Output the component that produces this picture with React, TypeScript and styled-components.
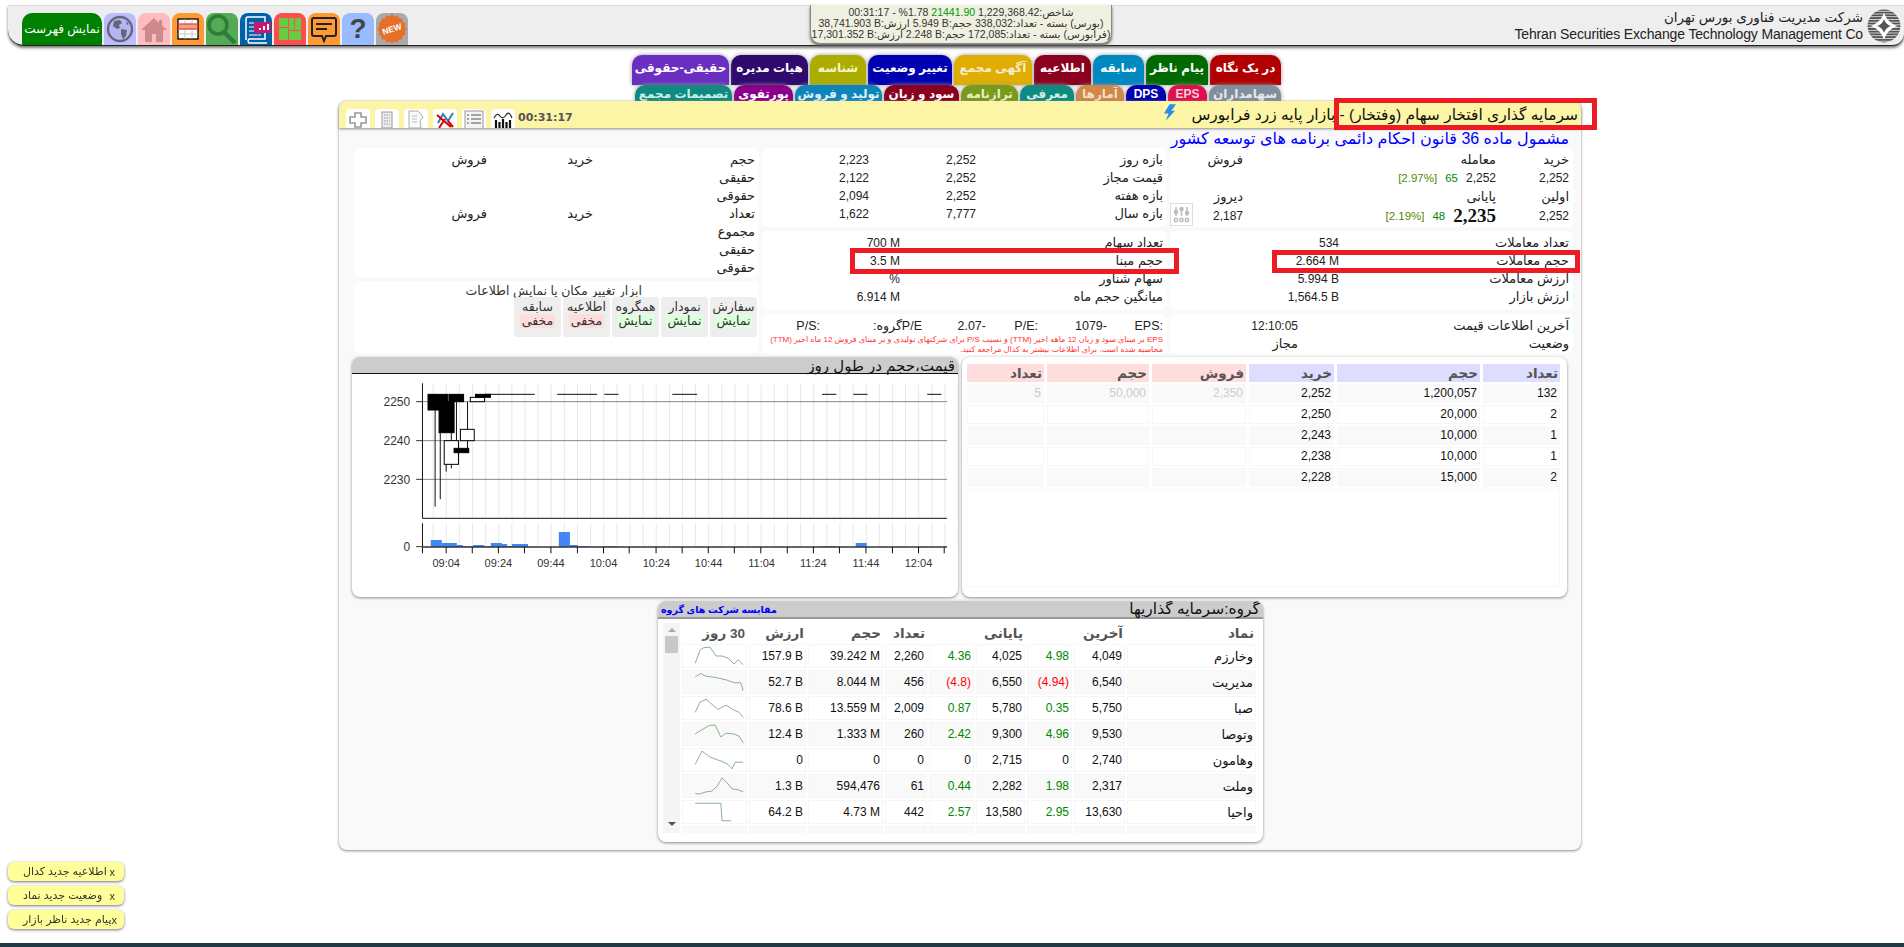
import React from "react";
import styled, { createGlobalStyle } from "styled-components";

const Global = createGlobalStyle`
  html, body { margin: 0; padding: 0; background: #fff; overflow: hidden; height: 100%; }
  body { font-family: "Liberation Sans", "DejaVu Sans", sans-serif; font-size: 12px; color: #222; }
`;
const Page = styled.div`width: 1904px; height: 947px; padding: 5px 0 0 8px; box-sizing: border-box;`;

/* ---------- top bar ---------- */
const TopBar = styled.header`
  display: grid; grid-template-columns: 802px 302px 1fr;
  height: 41px; box-sizing: border-box; background: #eee;
  border-top: 1px solid #ddd; border-bottom: 1px solid #222;
  border-radius: 0 0 12px 16px; box-shadow: 0 2px 3px #777;
`;
const Launch = styled.div`display: flex; gap: 2px; align-items: flex-end; padding-left: 14px;`;
const MenuButton = styled.div`
  width: 80px; height: 32px; background: #008000; color: #fff; border-radius: 10px 10px 0 0;
  display: flex; align-items: center; justify-content: center; font-size: 12px; direction: rtl; white-space: nowrap;
`;
const AppTile = styled.div<{ $bg: string }>`
  width: 32px; height: 32px; background: ${p => p.$bg}; border-radius: 8px 8px 0 0;
  display: flex; align-items: center; justify-content: center; overflow: hidden;
`;
const HelpGlyph = styled.span`font: bold 28px "Liberation Sans", sans-serif; color: #444;`;
const StatusBox = styled.div`
  height: 39px; margin-top: -1px; box-sizing: border-box; background: #f0f0e0; border-radius: 0 0 10px 10px;
  border: 1px solid #888; border-top: 0; box-shadow: 0 2px 3px #666; font-size: 10.5px; line-height: 11px;
  text-align: center; padding-top: 2px; direction: rtl; color: #333; white-space: nowrap; overflow: hidden;
`;
const Up = styled.span`color: #090;`;
const Brand = styled.div`display: flex; justify-content: flex-end; align-items: center; gap: 4px; padding-right: 3px;`;
const BrandText = styled.div`text-align: right; color: #222; white-space: nowrap;`;
const BrandFa = styled.div`font-size: 13.5px; line-height: 17px; direction: rtl; text-align: right;`;
const BrandEn = styled.div`font-size: 14px; line-height: 17px; letter-spacing: -0.15px;`;

/* ---------- tabs ---------- */
const TabsBlock = styled.nav`width: 652px; margin: 9px 0 0 621px; height: 46px;`;
const TabRow = styled.div<{ $h: number; $z: number; $pad: string }>`
  display: flex; direction: rtl; gap: 2px; height: ${p => p.$h}px; position: relative; z-index: ${p => p.$z};
  & > * { padding: ${p => p.$pad}; }
`;
const Tab = styled.div<{ $w: number; $bg: string; $fg?: string }>`
  width: ${p => p.$w}px; flex: none; background: ${p => p.$bg}; color: ${p => p.$fg || "#fff"};
  border-radius: 10px 10px 0 0; box-shadow: 0 0 4px #999; display: flex; justify-content: center; align-items: center;
  font-size: 12px; font-weight: bold; white-space: nowrap; box-sizing: border-box; overflow: hidden;
`;

/* ---------- panel ---------- */
const Panel = styled.main`
  position: relative; z-index: 3; width: 1242px; height: 749px; margin-left: 331px; box-sizing: border-box; background: #f9f9f9;
  border-radius: 8px; box-shadow: 0 1px 3px #888;
`;
const PanelHead = styled.div`
  height: 27px; background: #fbf5a5; border-radius: 8px 8px 0 0; box-shadow: 0 1px 3px #888;
  display: flex; justify-content: space-between; align-items: flex-end; padding: 0 3px 0 7px; overflow: hidden;
`;
const Tools = styled.div`display: flex; gap: 5px; align-items: flex-end;`;
const ToolTile = styled.div`
  width: 24px; height: 19px; background: #fff; border-radius: 4px 4px 0 0; overflow: hidden; display: flex; justify-content: center;
`;
const Clock = styled.div`font: bold 11px "DejaVu Sans", sans-serif; color: #555; align-self: center; margin-left: -2px; margin-top: -2px;`;
const Title = styled.div`direction: rtl; align-self: center; font-size: 15.5px; color: #111; white-space: nowrap;`;
const Bolt = styled.svg`width: 13px; height: 17px; position: absolute; left: 824px; top: 3px;`;
const PanelBody = styled.div`padding: 0 8px 0 15px;`;
const Subtitle = styled.div`height: 20px; line-height: 22px; direction: rtl; color: #00f; font-size: 16px; padding-right: 4px; white-space: nowrap;`;
const InfoGrid = styled.section`display: grid; grid-template-columns: 405px 405px 403px; gap: 3px; position: relative;`;
const Column = styled.div<{ $gap: number }>`display: flex; flex-direction: column; gap: ${p => p.$gap}px;`;
const Card = styled.div<{ $h: number; $pr?: number }>`
  height: ${p => p.$h}px; background: #fff; border-radius: 6px; box-sizing: border-box; padding: 3px ${p => p.$pr ?? 4}px 0 0; overflow: hidden;
`;
const Rows = styled.div<{ $cols: string; $rows?: string }>`
  display: grid; direction: rtl; grid-template-columns: ${p => p.$cols}; ${p => p.$rows ? `grid-template-rows:${p.$rows};` : "grid-auto-rows: 18px;"}
  align-items: center; white-space: nowrap; line-height: 18px; font-size: 13px; color: #222;
`;
const Val = styled.span`direction: ltr; unicode-bidi: isolate; text-align: right; font-size: 12px;`;
const Pair = styled.span`display: inline-flex; gap: 8px; align-items: center; font-size: 12px;`;
const Big = styled.b`font: bold 19px "Liberation Serif", serif; color: #111;`;
const Plus = styled.span`color: #080; font-size: 11.5px;`;
const Bracket = styled.span`color: #580; font-size: 11.5px; direction: ltr; unicode-bidi: isolate;`;
const FilterButton = styled.div`
  position: absolute; left: 816px; top: 55px; width: 23px; height: 23px; box-sizing: border-box; border: 1px solid #ddd; background: #fff;
  display: flex; align-items: center; justify-content: center;
`;
const Note = styled.div`direction: rtl; color: #f33; font-size: 8px; line-height: 9.5px; white-space: nowrap;`;
const RatioRow = styled.div`display: grid; direction: rtl; grid-template-columns: 56px 69px 52px 64px 102px 1fr; line-height: 18px; height: 18px; color: #222; font-size: 12.5px;`;
const Centered = styled.div`text-align: center; direction: rtl; line-height: 12px; height: 12px; margin: 1px 0 0 118px; width: 170px; white-space: nowrap; color: #333; font-size: 12.5px;`;
const ToggleRow = styled.div`display: flex; direction: rtl; gap: 2px;`;
const Toggle = styled.div`
  width: 47px; height: 40px; background: #eee; border-radius: 3px; display: flex; flex-direction: column; align-items: center; padding-top: 3px; box-sizing: border-box;
  line-height: 14px; color: #333; font-size: 12.5px;
`;
const Chip = styled.span<{ $on: boolean }>`background: ${p => p.$on ? "#dfd" : "#fdd"}; padding: 0 2px; white-space: nowrap;`;

/* ---------- chart and book ---------- */
const Split = styled.section`display: grid; grid-template-columns: 606px 605px; gap: 4px; margin: 3px 0 0 -2px; height: 240px;`;
const Box = styled.div`background: #fff; border-radius: 8px; box-shadow: 0 1px 3px #888; overflow: hidden;`;
const BoxHead = styled.div`
  height: 16px; background: #ccc; border-bottom: 1px solid #111; direction: rtl; padding-right: 3px; font-size: 15px; line-height: 17px; color: #111;
`;
const ChartSvg = styled.svg`display: block; width: 606px; height: 222px;`;
const Book = styled.table`
  border-collapse: separate; border-spacing: 3px 2px; direction: rtl; margin: 5px 4px 0 auto; width: 597px; table-layout: fixed;
`;
const BookHead = styled.th<{ $bg: string; $w: number }>`
  width: ${p => p.$w}px; height: 18px; padding: 0 2px; background: ${p => p.$bg}; color: #555; font-size: 13.5px; font-weight: bold; text-align: right;
`;
const BookCell = styled.td<{ $odd: boolean; $dim?: boolean }>`
  height: 17px; padding: 0 2px; direction: ltr; text-align: right; background: ${p => p.$odd ? "#f9f9f9" : "#fff"}; border: 1px solid ${p => p.$odd ? "#f9f9f9" : "#f6f6f6"};
  color: ${p => p.$dim ? "#ccc" : "#111"}; font-size: 12px; line-height: 17px;
`;
const BookEmpty = styled.td`height: 94px; border: 1px solid #f8f8f8;`;

/* ---------- group ---------- */
const GroupBox = styled(Box)`width: 605px; height: 241px; margin: 4px 0 0 304px;`;
const GroupHead = styled.div`
  height: 16px; background: #ccc; border-bottom: 2px solid #999; display: flex; justify-content: space-between; align-items: center; padding: 0 3px;
`;
const GroupLink = styled.span`color: #00f; font-size: 9.5px; font-weight: bold; direction: rtl;`;
const GroupTitle = styled.span`direction: rtl; font-size: 15.5px; color: #111;`;
const GroupInner = styled.div`display: flex; align-items: flex-start; height: 210px; margin: 4px 5px 0 5px; overflow: hidden;`;
const FakeBar = styled.div`
  width: 17px; flex: none; background: #f5f5f5; display: flex; flex-direction: column; align-items: center; padding-top: 5px; box-sizing: border-box; position: relative; height: 210px;
`;
const Thumb = styled.div`width: 13px; height: 17px; background: #c8c8c8; margin-top: 4px;`;
const ArrowUp = styled.div`width: 0; height: 0; border: 4px solid transparent; border-top: 0; border-bottom: 4px solid #aaa;`;
const ArrowDown = styled.div`position: absolute; bottom: 7px; width: 0; height: 0; border: 4px solid transparent; border-bottom: 0; border-top: 4px solid #555;`;
const GroupTable = styled.table`
  border-collapse: separate; border-spacing: 2px; direction: rtl; table-layout: fixed; width: 578px; margin-top: -1px; flex: none;
`;
const GroupTh = styled.th<{ $w?: number }>`
  ${p => p.$w ? `width:${p.$w}px;` : ""} height: 18px; padding: 0 2px; text-align: right; color: #555; font-size: 13.5px; font-weight: bold; white-space: nowrap;
`;
const GroupTd = styled.td<{ $odd: boolean; $c?: string }>`
  height: 22px; padding: 0 2px; box-sizing: content-box; background: ${p => p.$odd ? "#fff" : "#f9f9f9"}; border: 1px solid #f6f6f6;
  direction: ltr; text-align: right; color: ${p => p.$c || "#111"}; font-size: 12px; white-space: nowrap;
`;
const GroupName = styled(GroupTd)`font-size: 13px;`;
const SparkCell = styled.td<{ $odd: boolean }>`height: 22px; padding: 0; background: ${p => p.$odd ? "#fff" : "#f9f9f9"}; border: 1px solid #f6f6f6;`;
const Spark = styled.svg`display: block; width: 62px; height: 22px;`;

/* ---------- overlays ---------- */
const Toasts = styled.aside`position: fixed; left: 8px; top: 862px; display: flex; flex-direction: column; gap: 5px;`;
const Toast = styled.div`
  width: 116px; height: 19px; background: #ffff99; border-radius: 6px; box-shadow: 0 1px 3px #777; display: flex; justify-content: space-between; align-items: center;
  padding: 0 9px 0 15px; box-sizing: border-box; font-size: 11px; color: #333; white-space: nowrap;
`;
const Footer = styled.div`position: fixed; left: 0; right: 0; bottom: 0; height: 4px; background: #1f3a44;`;
const Mark = styled.div<{ $x: number; $y: number; $w: number; $h: number }>`
  position: fixed; left: ${p => p.$x}px; top: ${p => p.$y}px; width: ${p => p.$w}px; height: ${p => p.$h}px; border: 5px solid #ed1c24; box-sizing: border-box; z-index: 10; pointer-events: none;
`;

/* ---------- drawings ---------- */
const Globe = () => (
  <svg width="28" height="28" viewBox="0 0 28 28"><circle cx="14" cy="14" r="12" fill="#b5b5f5" stroke="#667" strokeWidth="2.4" />
    <path d="M8 6l6-1 2 3-3 2 1 3-3 1-4-3zM15 14l6 1-1 6-3 3-2-5z M20 6l3 3-2 1z" fill="#667" /></svg>
);
const Home = () => (
  <svg width="30" height="28" viewBox="0 0 30 28"><path d="M15 3L2 15h4v12h7v-8h4v8h7V15h4l-5-4.600V5h-3v3z" fill="#cc8a8d" /></svg>
);
const TableIcon = () => (
  <svg width="22" height="22" viewBox="0 0 22 22"><rect x="1" y="1" width="20" height="20" fill="#fff" stroke="#111" strokeWidth="1.400" />
    <path d="M1 6h20M1 11h20M1 16h20M8 1v20M15 1v20" stroke="#bbb" strokeWidth=".8" /><rect x="1.500" y="6" width="19" height="5" fill="#f5a080" stroke="#d33" /></svg>
);
const SearchIcon = () => (
  <svg width="32" height="30" viewBox="0 0 32 30"><circle cx="12" cy="11" r="9" fill="none" stroke="#2e7d3a" strokeWidth="3.600" /><path d="M18 18l11 11" stroke="#2e7d3a" strokeWidth="4.500" /></svg>
);
const BookIcon = () => (
  <svg width="30" height="30" viewBox="0 0 30 30"><path d="M5 26V5a2 2 0 012-2h17v22H8a3 3 0 000 4h18" fill="none" stroke="#fff" strokeWidth="1.500" />
    <path d="M8 9h7M8 13h12M8 17h12M8 21h12" stroke="#fff" strokeWidth="1" /><path d="M13 8h17v11h-12l-2 3v-3h-3z" fill="#c8186e" /><path d="M18 16v-2h2v2zM22 16v-4h2v4zM26 16v-6h2v6z" fill="#fff" /></svg>
);
const GridIcon = () => (
  <svg width="24" height="24" viewBox="0 0 24 24" fill="#6c4"><rect x="1" y="1" width="9" height="9" /><rect x="1" y="11" width="9" height="12" /><rect x="11" y="1" width="5" height="12" /><rect x="17" y="1" width="6" height="12" /><rect x="11" y="14" width="12" height="9" /></svg>
);
const ChatIcon = () => (
  <svg width="28" height="28" viewBox="0 0 28 28"><path d="M4 3h20a2 2 0 012 2v14a2 2 0 01-2 2h-8l-2 5-2-5H4a2 2 0 01-2-2V5a2 2 0 012-2z" fill="none" stroke="#222" strokeWidth="2" /><path d="M6 9h16M6 14h11" stroke="#222" strokeWidth="2" /></svg>
);
const NewBadge = () => {
  const pts = Array.from({ length: 32 }, (_, i) => {
    const r = i % 2 ? 13 : 14.500, a = (i * Math.PI) / 16;
    return `${15 + r * Math.cos(a)},${15 + r * Math.sin(a)}`;
  }).join(" ");
  return (
    <svg width="30" height="30" viewBox="0 0 30 30"><polygon points={pts} fill="#e4702a" /><text x="15" y="18" fontSize="8.500" fontWeight="bold" fill="#fff" textAnchor="middle" transform="rotate(-18 15 15)" fontFamily="Liberation Sans">NEW</text></svg>
  );
};
const Logo = () => (
  <svg width="34" height="34" viewBox="0 0 30 30">
    <defs><pattern id="st" width="4" height="2.400" patternUnits="userSpaceOnUse"><rect width="4" height="1.700" fill="#555" /></pattern></defs>
    <circle cx="15" cy="15" r="14.500" fill="url(#st)" />
    <path d="M15 3c2 6 6 10 12 12-6 2-10 6-12 12-2-6-6-10-12-12 6-2 10-6 12-12z" fill="#fff" />
    <path d="M15 9c1 3 3 5 6 6-3 1-5 3-6 6-1-3-3-5-6-6 3-1 5-3 6-6z" fill="#555" />
  </svg>
);
const ToolPlus = () => <svg width="18" height="19" viewBox="0 0 18 19"><path d="M6 4h6v4h5v6h-5v4H6v-4H1V8h5z" fill="none" stroke="#999" strokeWidth="1.600" /></svg>;
const ToolCalc = () => <svg width="14" height="19" viewBox="0 0 14 19"><rect x="2" y="3" width="10" height="16" fill="#eee" stroke="#999" /><path d="M4 6h6M4 9h6M4 12h6M4 15h6" stroke="#999" strokeDasharray="1.500 1" /></svg>;
const ToolDoc = () => <svg width="18" height="19" viewBox="0 0 18 19"><path d="M2 2h9l5 6-3 4 1 7H2z" fill="#fafafa" stroke="#aaa" /><path d="M5 7h5M5 10h5M5 13h5" stroke="#bbb" /></svg>;
const ToolNet = () => <svg width="20" height="19" viewBox="0 0 20 19"><path d="M3 14l5-9 5 7 5-8" fill="none" stroke="#2a7fc0" strokeWidth="2" /><path d="M2 6l14 12M4 19l6-9" stroke="#d00" strokeWidth="2" /><path d="M13 12l5 6" stroke="#d00" strokeWidth="2" /></svg>;
const ToolList = () => <svg width="20" height="19" viewBox="0 0 20 19"><rect x="1" y="2" width="18" height="18" fill="#f4f4f4" stroke="#999" /><path d="M3 6h2M3 10h2M3 14h2M7 6h10M7 10h10M7 14h10" stroke="#888" strokeWidth="1.400" /></svg>;
const ToolBars = () => <svg width="20" height="19" viewBox="0 0 20 19"><path d="M1 9q3-6 6-2t6-1 6 3" fill="none" stroke="#222" strokeWidth="1.200" /><path d="M3 19v-8M6.500 19v-6M10 19v-9M13.500 19v-6M17 19v-8" stroke="#111" strokeWidth="2.200" /></svg>;
const FilterIcon = () => <svg width="19" height="19" viewBox="0 0 19 19" fill="none" stroke="#bbb" strokeWidth="1.500"><path d="M4 2v9M9.500 2v9M15 2v9" /><circle cx="4" cy="7" r="1.500" fill="#bbb" /><circle cx="9.500" cy="4" r="1.500" fill="#bbb" /><circle cx="15" cy="8" r="1.500" fill="#bbb" /><circle cx="4" cy="15" r="1.700" /><circle cx="9.500" cy="15" r="1.700" /><circle cx="15" cy="15" r="1.700" /></svg>;

/* ---------- chart ---------- */
const X = (z: number) => z / 2.53 - 7;
const Y = (z: number) => z / 3 - 19;
const tickZ = [256, 322, 388, 454, 521, 588, 654, 719, 787, 853, 919, 985, 1052, 1119, 1185, 1251, 1318, 1385, 1451, 1516];
const timeLabels: [number, string][] = [[256, "09:04"], [388, "09:24"], [521, "09:44"], [654, "10:04"], [788, "10:24"], [920, "10:44"], [1054, "11:04"], [1185, "11:24"], [1318, "11:44"], [1451, "12:04"]];
const wicks: number[][] = [[228, 118, 455], [241, 233, 433], [256, 328, 350], [269, 233, 340], [282, 140, 280], [310, 140, 280]];
const candles: [number, number, number, number, boolean][] = [
  [210, 260, 118, 165, true], [238, 276, 140, 233, true], [263, 300, 118, 140, true], [251, 287, 257, 328, false],
  [276, 313, 280, 293, true], [292, 327, 223, 257, false], [317, 353, 127, 140, false], [330, 368, 118, 127, true],
];
const dashes = [[353, 480], [537, 638], [656, 692], [828, 891], [1207, 1243], [1286, 1322], [1473, 1509]];
const vols = [[217, 245, 555], [245, 283, 564], [283, 298, 570], [298, 324, 574], [324, 352, 570], [352, 369, 574], [369, 397, 564], [397, 410, 567], [410, 422, 573], [422, 463, 567], [541, 569, 531], [569, 589, 570], [589, 620, 574], [654, 690, 574], [1207, 1245, 574], [1292, 1320, 564]];

const Chart = () => {
  const grid = Array.from({ length: 41 }, (_, i) => 223 + i * 33.2);
  return (
    <ChartSvg viewBox="0 0 606 222">
      {grid.map(z => <line key={z} x1={X(z)} x2={X(z)} y1={Y(88)} y2={Y(490)} stroke="#e8e8e8" />)}
      {grid.map(z => <line key={"v" + z} x1={X(z)} x2={X(z)} y1={Y(505)} y2={Y(576)} stroke="#e8e8e8" />)}
      {[140, 257, 373].map(z => <line key={z} x1={X(196)} x2={X(1523)} y1={Y(z)} y2={Y(z)} stroke="#888" strokeWidth="1" />)}
      <path d={`M${X(196)} ${Y(85)}V${Y(490)}H${X(1523)}M${X(196)} ${Y(505)}V${Y(595)}`} fill="none" stroke="#111" />
      {[[2250, 140], [2240, 257], [2230, 373]].map(([t, z]) => <text key={t} x={X(165)} y={Y(z) + 4.5} fontSize="12" fill="#333" textAnchor="end" fontFamily="Liberation Sans">{t}</text>)}
      {wicks.map(([x, a, b]) => <line key={x} x1={X(x)} x2={X(x)} y1={Y(a)} y2={Y(b)} stroke="#111" />)}
      {dashes.map(([a, b]) => <line key={a} x1={X(a)} x2={X(b)} y1={Y(118)} y2={Y(118)} stroke="#111" />)}
      {candles.map(([a, b, t, u, black]) => <rect key={a + "" + t} x={X(a)} y={Y(t)} width={X(b) - X(a)} height={Y(u) - Y(t)} fill={black ? "#000" : "#fff"} stroke="#000" strokeWidth="1" />)}
      {vols.map(([a, b, t]) => <rect key={a} x={X(a)} y={Y(t)} width={X(b) - X(a)} height={Y(576) - Y(t)} fill="#4285f4" />)}
      <line x1={X(196)} x2={X(1523)} y1={Y(576)} y2={Y(576)} stroke="#333" strokeWidth="1.500" />
      <text x={X(165)} y={Y(575) + 4.5} fontSize="12" fill="#333" textAnchor="end" fontFamily="Liberation Sans">0</text>
      <line x1={X(180)} x2={X(196)} y1={Y(575)} y2={Y(575)} stroke="#333" />
      {[140, 257, 373].map(z => <line key={"t" + z} x1={X(180)} x2={X(196)} y1={Y(z)} y2={Y(z)} stroke="#333" />)}
      {tickZ.map(z => <line key={"k" + z} x1={X(z)} x2={X(z)} y1={Y(576)} y2={Y(595)} stroke="#111" />)}
      {timeLabels.map(([z, t]) => <text key={t} x={X(z)} y={Y(625) + 4} fontSize="11" fill="#333" textAnchor="middle" fontFamily="Liberation Sans">{t}</text>)}
    </ChartSvg>
  );
};

/* ---------- data ---------- */
const tabs1: [string, number, string, string?][] = [
  ["در یک نگاه", 71, "#b00000"], ["پیام ناظر", 62, "#006a00"], ["سابقه", 51, "#0088c0"], ["اطلاعیه", 57, "#8b001f"],
  ["آگهی مجمع", 78, "#e0ae00", "#f4ead0"], ["تغییر وضعیت", 84, "#0000b0"], ["شناسه", 56, "#adad00", "#f5f5c8"], ["هیات مدیره", 77, "#2e0a6e"], ["حقیقی-حقوقی", 97, "#6a2fc0"],
];
const tabs2: [string, number, string, string?][] = [
  ["سهامداران", 72, "#7f8fa0", "#e8e8e8"], ["EPS", 39, "#e01050", "#f5d0d8"], ["DPS", 40, "#0000b0"], ["آمارها", 48, "#d0874a", "#f5dfc8"], ["معرفی", 54, "#0e8a80", "#d0eee8"],
  ["ترازنامه", 57, "#7a9a1a", "#e8eec8"], ["سود و زیان", 75, "#8b001f"], ["تولید و فروش", 87, "#0d85bb", "#e0f0f8"], ["پورتفوی", 59, "#8a008a"], ["تصمیمات مجمع", 97, "#108a80", "#c8eee8"],
];
const toggles: [string, string, boolean][] = [["سفارش", "نمایش", true], ["نمودار", "نمایش", true], ["همگروه", "نمایش", true], ["اطلاعیه", "مخفی", false], ["سابقه", "مخفی", false]];
const bookRows = [["132", "1,200,057", "2,252", "2,350", "50,000", "5"], ["2", "20,000", "2,250", "", "", ""], ["1", "10,000", "2,243", "", "", ""], ["1", "10,000", "2,238", "", "", ""], ["2", "15,000", "2,228", "", "", ""]];
const groupRows: { n: string; v: string[]; s: string }[] = [
  { n: "وخارزم", v: ["4,049", "4.98", "4,025", "4.36", "2,260", "39.242 M", "157.9 B"], s: "108,50 120,14 130,7 145,6 160,30 175,30 190,36 205,52 215,40 228,54" },
  { n: "مدیریت", v: ["6,540", "(4.94)", "6,550", "(4.8)", "456", "8.044 M", "52.7 B"], s: "108,16 122,7 135,14 160,18 185,24 205,32 222,32 228,54" },
  { n: "صبا", v: ["5,750", "0.35", "5,780", "0.87", "2,009", "13.559 M", "78.6 B"], s: "108,42 120,14 135,6 150,20 165,34 185,22 205,36 218,42 228,56" },
  { n: "وتوصا", v: ["9,530", "4.96", "9,300", "2.42", "260", "1.333 M", "12.4 B"], s: "108,30 122,20 145,6 158,6 172,38 185,28 205,30 218,36 228,54" },
  { n: "وهامون", v: ["2,740", "0", "2,715", "0", "0", "0", "0"], s: "108,42 125,6 145,22 160,28 175,34 190,42 200,54 208,36 228,36" },
  { n: "وملت", v: ["2,317", "1.98", "2,282", "0.44", "61", "594,476", "1.3 B"], s: "108,50 118,52 135,46 150,44 163,30 175,8 190,24 200,38 215,40 228,46" },
  { n: "واحیا", v: ["13,630", "2.95", "13,580", "2.57", "442", "4.73 M", "64.2 B"], s: "108,6 172,6 175,54 198,54" },
];
const pctColor = (s: string) => (s === "0" ? "#111" : s.startsWith("(") ? "#f00" : "#080");

export default function App() {
  return (
    <Page>
      <Global />
      <TopBar>
        <Launch>
          <MenuButton>نمایش فهرست</MenuButton>
          <AppTile $bg="#bcbcff"><Globe /></AppTile>
          <AppTile $bg="#ffbcc0"><Home /></AppTile>
          <AppTile $bg="#ff9933"><TableIcon /></AppTile>
          <AppTile $bg="#55aa55"><SearchIcon /></AppTile>
          <AppTile $bg="#0060a8"><BookIcon /></AppTile>
          <AppTile $bg="#ff4d4d"><GridIcon /></AppTile>
          <AppTile $bg="#ff9933"><ChatIcon /></AppTile>
          <AppTile $bg="#99bbff"><HelpGlyph>?</HelpGlyph></AppTile>
          <AppTile $bg="#aaaaaa"><NewBadge /></AppTile>
        </Launch>
        <StatusBox>
          <div>شاخص:1,229,368.42 <Up>21441.90</Up> 1.78% - 00:31:17</div>
          <div>(بورس) بسته - تعداد:338,032 حجم:<bdi dir="ltr">5.949 B</bdi> ارزش:<bdi dir="ltr">38,741.903 B</bdi></div>
          <div>(فرابورس) بسته - تعداد:172,085 حجم:<bdi dir="ltr">2.248 B</bdi> ارزش:<bdi dir="ltr">17,301.352 B</bdi></div>
        </StatusBox>
        <Brand>
          <BrandText>
            <BrandFa>شرکت مدیریت فناوری بورس تهران</BrandFa>
            <BrandEn>Tehran Securities Exchange Technology Management Co</BrandEn>
          </BrandText>
          <Logo />
        </Brand>
      </TopBar>

      <TabsBlock>
        <TabRow $h={30} $z={1} $pad="0 0 5px">{tabs1.map(([t, w, c, f]) => <Tab key={t} $w={w} $bg={c} $fg={f}>{t}</Tab>)}</TabRow>
        <TabRow $h={16} $z={2} $pad="2px 0 0">{tabs2.map(([t, w, c, f]) => <Tab key={t} $w={w} $bg={c} $fg={f}>{t}</Tab>)}</TabRow>
      </TabsBlock>

      <Panel>
        <PanelHead>
          <Tools>
            <ToolTile><ToolPlus /></ToolTile>
            <ToolTile><ToolCalc /></ToolTile>
            <ToolTile><ToolDoc /></ToolTile>
            <ToolTile><ToolNet /></ToolTile>
            <ToolTile><ToolList /></ToolTile>
            <ToolTile><ToolBars /></ToolTile>
            <Clock>00:31:17</Clock>
          </Tools>
          <Bolt viewBox="0 0 14 18"><path d="M7 0h7L9 7h4L3 18l3-8H1z" fill="#2a8fe8" /></Bolt>
          <Title>سرمایه گذاری افتخار سهام (وفتخار) - بازار پایه زرد فرابورس</Title>
        </PanelHead>
        <PanelBody>
          <Subtitle>مشمول ماده 36 قانون احکام دائمی برنامه های توسعه کشور</Subtitle>
          <InfoGrid>
            <Column $gap={4}>
              <Card $h={129}>
                <Rows $cols="162px 106px 1fr">
                  <span>حجم</span><span>خرید</span><span>فروش</span>
                  <span>حقیقی</span><span /><span />
                  <span>حقوقی</span><span /><span />
                  <span>تعداد</span><span>خرید</span><span>فروش</span>
                  <span>مجموع</span><span /><span />
                  <span>حقیقی</span><span /><span />
                  <span>حقوقی</span><span /><span />
                </Rows>
              </Card>
              <Card $h={72} $pr={2}>
                <Centered>ابزار تغییر مکان یا نمایش اطلاعات</Centered>
                <ToggleRow>
                  {toggles.map(([a, b, on]) => <Toggle key={a}><span>{a}</span><Chip $on={on}>{b}</Chip></Toggle>)}
                </ToggleRow>
              </Card>
            </Column>
            <Column $gap={4}>
              <Card $h={79}>
                <Rows $cols="187px 107px 1fr">
                  <span>بازه روز</span><Val>2,252</Val><Val>2,223</Val>
                  <span>قیمت مجاز</span><Val>2,252</Val><Val>2,122</Val>
                  <span>بازه هفته</span><Val>2,252</Val><Val>2,094</Val>
                  <span>بازه سال</span><Val>7,777</Val><Val>1,622</Val>
                </Rows>
              </Card>
              <Card $h={79}>
                <Rows $cols="263px 1fr">
                  <span>تعداد سهام</span><Val>700 M</Val>
                  <span>حجم مبنا</span><Val>3.5 M</Val>
                  <span>سهام شناور</span><Val>%</Val>
                  <span>میانگین حجم ماه</span><Val>6.914 M</Val>
                </Rows>
              </Card>
              <Card $h={40}>
                <RatioRow>
                  <span>:EPS</span><span>-1079</span><span>:P/E</span><span>-2.07</span><span>P/Eگروه:</span><span>:P/S</span>
                </RatioRow>
                <Note>EPS بر مبنای سود و زیان 12 ماهه اخیر (TTM) و نسبت P/S برای شرکتهای تولیدی و بر مبنای فروش 12 ماه اخیر (TTM)<br />محاسبه شده است. برای اطلاعات بیشتر به کدال مراجعه کنید.</Note>
              </Card>
            </Column>
            <Column $gap={4}>
              <Card $h={79}>
                <Rows $cols="73px 253px 1fr" $rows="18px 18px 20px 18px">
                  <span>خرید</span><span>معامله</span><span>فروش</span>
                  <Val>2,252</Val>
                  <Pair><span>2,252</span><Plus>65</Plus><Bracket>[2.97%]</Bracket></Pair><span />
                  <span>اولین</span><span>پایانی</span><span>دیروز</span>
                  <Val>2,252</Val>
                  <Pair><Big>2,235</Big><Plus>48</Plus><Bracket>[2.19%]</Bracket></Pair><Val>2,187</Val>
                </Rows>
              </Card>
              <Card $h={79}>
                <Rows $cols="230px 1fr">
                  <span>تعداد معاملات</span><Val>534</Val>
                  <span>حجم معاملات</span><Val>2.664 M</Val>
                  <span>ارزش معاملات</span><Val>5.994 B</Val>
                  <span>ارزش بازار</span><Val>1,564.5 B</Val>
                </Rows>
              </Card>
              <Card $h={40}>
                <Rows $cols="271px 1fr" $rows="18px 18px">
                  <span>آخرین اطلاعات قیمت</span><Val>12:10:05</Val>
                  <span>وضعیت</span><span>مجاز</span>
                </Rows>
              </Card>
            </Column>
            <FilterButton><FilterIcon /></FilterButton>
          </InfoGrid>

          <Split>
            <Box>
              <BoxHead>قیمت،حجم در طول روز</BoxHead>
              <Chart />
            </Box>
            <Box>
              <Book>
                <thead>
                  <tr>
                    <BookHead $bg="#ddf" $w={73}>تعداد</BookHead>
                    <BookHead $bg="#ddf" $w={139}>حجم</BookHead>
                    <BookHead $bg="#ddf" $w={81}>خرید</BookHead>
                    <BookHead $bg="#fdd" $w={90}>فروش</BookHead>
                    <BookHead $bg="#fdd" $w={98}>حجم</BookHead>
                    <BookHead $bg="#fdd" $w={73}>تعداد</BookHead>
                  </tr>
                </thead>
                <tbody>
                  {bookRows.map((r, i) => (
                    <tr key={i}>
                      {r.map((c, j) => <BookCell key={j} $odd={i % 2 === 0} $dim={j > 2}>{c}</BookCell>)}
                    </tr>
                  ))}
                  <tr><BookEmpty colSpan={6} /></tr>
                </tbody>
              </Book>
            </Box>
          </Split>

          <GroupBox>
            <GroupHead>
              <GroupLink>مقایسه شرکت های گروه</GroupLink>
              <GroupTitle>گروه:سرمایه گذاریها</GroupTitle>
            </GroupHead>
            <GroupInner>
              <FakeBar><ArrowUp /><Thumb /><ArrowDown /></FakeBar>
              <GroupTable>
                <thead>
                  <tr>
                    <GroupTh $w={125}>نماد</GroupTh>
                    <GroupTh $w={47}>آخرین</GroupTh>
                    <GroupTh $w={41} />
                    <GroupTh $w={45}>پایانی</GroupTh>
                    <GroupTh $w={41} />
                    <GroupTh $w={38}>تعداد</GroupTh>
                    <GroupTh $w={71}>حجم</GroupTh>
                    <GroupTh $w={53}>ارزش</GroupTh>
                    <GroupTh>30 روز</GroupTh>
                  </tr>
                </thead>
                <tbody>
                  {groupRows.map((r, i) => {
                    const odd = i % 2 === 0;
                    return (
                      <tr key={r.n}>
                        <GroupName $odd={odd}>{r.n}</GroupName>
                        <GroupTd $odd={odd}>{r.v[0]}</GroupTd>
                        <GroupTd $odd={odd} $c={pctColor(r.v[1])}>{r.v[1]}</GroupTd>
                        <GroupTd $odd={odd}>{r.v[2]}</GroupTd>
                        <GroupTd $odd={odd} $c={pctColor(r.v[3])}>{r.v[3]}</GroupTd>
                        <GroupTd $odd={odd}>{r.v[4]}</GroupTd>
                        <GroupTd $odd={odd}>{r.v[5]}</GroupTd>
                        <GroupTd $odd={odd}>{r.v[6]}</GroupTd>
                        <SparkCell $odd={odd}>
                          <Spark viewBox="80 0 155 60" preserveAspectRatio="none"><polyline points={r.s} fill="none" stroke="#6a9a6a" strokeWidth="2" /></Spark>
                        </SparkCell>
                      </tr>
                    );
                  })}
                  <tr>{Array.from({ length: 9 }, (_, i) => <GroupTd key={i} $odd={false} />)}</tr>
                </tbody>
              </GroupTable>
            </GroupInner>
          </GroupBox>
        </PanelBody>
      </Panel>

      <Toasts>
        <Toast><span dir="rtl">اطلاعیه جدید کدال</span><span>x</span></Toast>
        <Toast><span dir="rtl">وضعیت جدید نماد</span><span>x</span></Toast>
        <Toast><span dir="rtl">پیام جدید ناظر بازار</span><span>x</span></Toast>
      </Toasts>
      <Footer />
      <Mark $x={1334} $y={98} $w={263} $h={32} />
      <Mark $x={850} $y={248} $w={329} $h={26} />
      <Mark $x={1272} $y={250} $w={308} $h={23} />
    </Page>
  );
}
